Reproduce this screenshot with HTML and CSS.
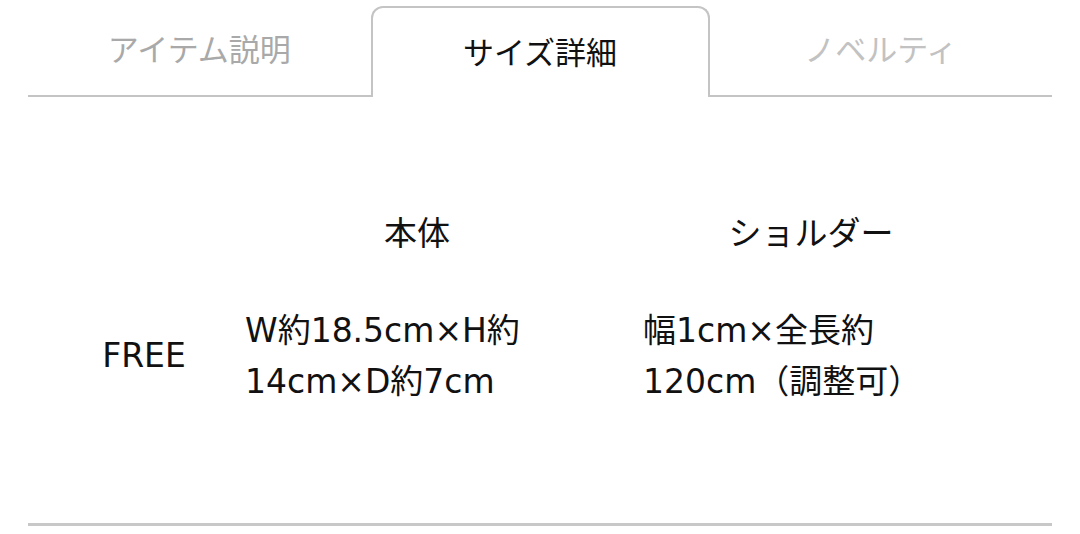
FILE: index.html
```html
<!DOCTYPE html>
<html lang="ja">
<head>
    <meta charset="UTF-8">
    <meta name="viewport" content="width=device-width, initial-scale=1.0">
    <title>サイズ詳細</title>
    <link rel="stylesheet" href="styles.css">
</head>
<body>
    <nav class="tabs">
        <div class="tab">アイテム説明</div>
        <div class="tab active">サイズ詳細</div>
        <div class="tab faint">ノベルティ</div>
    </nav>

    <section class="size-table">
        <div class="col col-label">
            <div class="head"></div>
            <div class="cell">FREE</div>
        </div>
        <div class="col col-body">
            <div class="head">本体</div>
            <div class="cell">W約18.5cm×H約<br>14cm×D約7cm</div>
        </div>
        <div class="col col-strap">
            <div class="head">ショルダー</div>
            <div class="cell">幅1cm×全長約<br>120cm（調整可）</div>
        </div>
    </section>

    <hr class="rule">
</body>
</html>
```

FILE: styles.css
```css
body {
    margin: 0;
    background: #fff;
    color: #111;
    font-family: "DejaVu Sans", "Noto Sans CJK JP", sans-serif;
}
.tabs {
    display: flex;
    margin: 6px 28px 0;
    font-family: "Noto Sans CJK JP", sans-serif;
}
.tab {
    flex: 1;
    height: 91px;
    display: flex;
    align-items: center;
    justify-content: center;
    font-size: 31px;
    color: #a9a9a9;
    border-bottom: 2px solid #c4c4c4;
    padding-bottom: 6px;
    box-sizing: border-box;
}
.tab.faint {
    color: #c2c2c2;
}
.tab.active {
    flex: 0 0 339px;
    color: #111;
    border: 2px solid #c4c4c4;
    border-bottom: none;
    border-radius: 12px 12px 0 0;
    padding-bottom: 4px;
}
.size-table {
    display: flex;
    margin-left: 58px;
    padding-top: 107px;
}
.col {
    display: flex;
    flex-direction: column;
}
.col-label {
    width: 172px;
}
.col-body {
    width: 374px;
}
.col-strap {
    width: 414px;
}
.head {
    height: 54px;
    font-family: "Noto Sans CJK JP", sans-serif;
    font-size: 33px;
    text-align: center;
    line-height: 54px;
}
.cell {
    height: 195px;
    font-size: 33px;
    line-height: 51px;
    display: flex;
    align-items: center;
}
.col-label .cell {
    justify-content: center;
}
.col-body .cell {
    padding-left: 15px;
}
.col-strap .cell {
    padding-left: 39px;
}
.rule {
    margin: 70px 28px 0;
    border: none;
    height: 3px;
    background: #c8c8c8;
}
```
